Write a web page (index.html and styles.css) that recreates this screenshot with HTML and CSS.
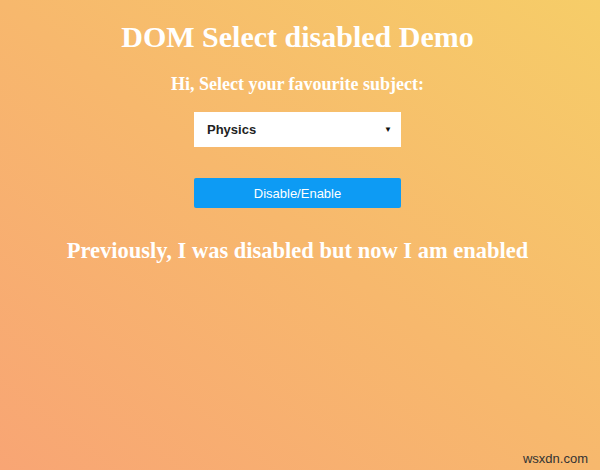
FILE: index.html
```html
<!DOCTYPE html>
<html>
<head>
<meta charset="utf-8">
<link rel="stylesheet" href="styles.css">
</head>
<body>
<main class="page">
  <h1 class="title">DOM Select disabled Demo</h1>
  <h3 class="subtitle">Hi, Select your favourite subject:</h3>
  <div class="select">
    <span class="select-value">Physics</span>
    <span class="select-arrow">&#9660;</span>
  </div>
  <button class="btn">Disable/Enable</button>
  <h2 class="message">Previously, I was disabled but now I am enabled</h2>
</main>
<div class="watermark">wsxdn.com</div>
</body>
</html>
```
FILE: styles.css
```css
html, body {
  margin: 0;
  padding: 0;
  width: 600px;
  height: 470px;
  overflow: hidden;
}
body {
  background: linear-gradient(to top right, #f8a574 0%, #f7b86d 50%, #f6cd68 100%);
  font-family: "Liberation Serif", "Times New Roman", serif;
  color: #fff;
  position: relative;
}
.page {
  display: flex;
  flex-direction: column;
  align-items: center;
  padding-top: 20px;
  padding-right: 5px;
}
.title {
  margin: 0;
  font-size: 30px;
  font-weight: bold;
  line-height: 34px;
}
.subtitle {
  margin: 0;
  margin-top: 19px;
  font-size: 18px;
  font-weight: bold;
  line-height: 22px;
}
.select {
  margin-top: 17px;
  width: 207px;
  height: 35px;
  background: #fff;
  box-sizing: border-box;
  display: flex;
  align-items: center;
  justify-content: space-between;
  padding: 0 9px 0 13px;
  font-family: "Liberation Sans", Arial, sans-serif;
  color: #222;
}
.select-value {
  font-size: 13px;
  font-weight: bold;
}
.select-arrow {
  font-size: 8px;
  color: #111;
}
.btn {
  margin-top: 31px;
  width: 207px;
  height: 30px;
  border: none;
  border-radius: 2px;
  background: #0d9bf4;
  color: #fff;
  font-family: "Liberation Sans", Arial, sans-serif;
  font-size: 13px;
  padding: 0;
}
.message {
  margin: 0;
  margin-top: 30px;
  font-size: 22.5px;
  font-weight: bold;
  line-height: 26px;
}
.watermark {
  position: absolute;
  right: 12px;
  bottom: 4px;
  font-family: "Liberation Sans", Arial, sans-serif;
  font-size: 13px;
  color: #333;
}
```
